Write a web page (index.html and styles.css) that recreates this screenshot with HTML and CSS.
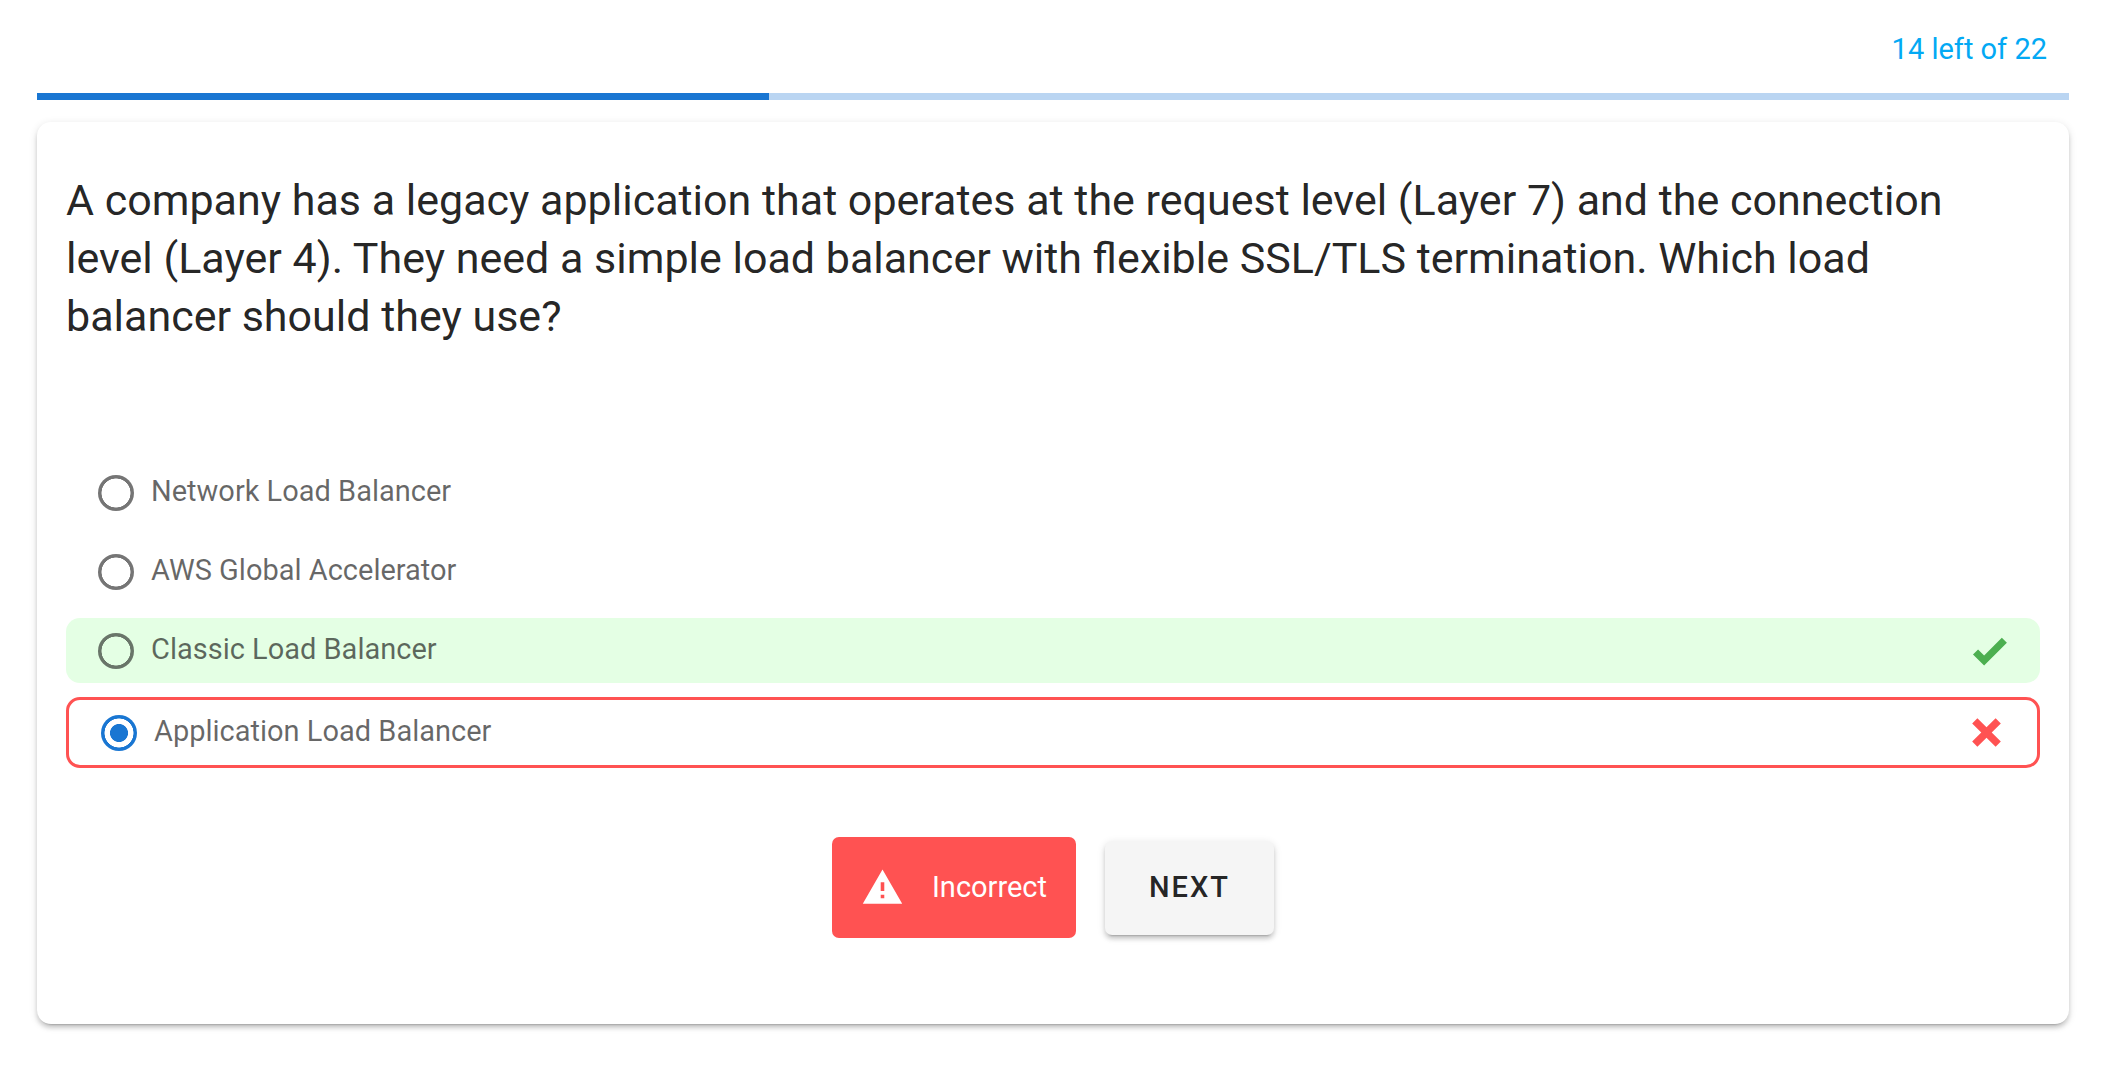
FILE: index.html
```html
<!DOCTYPE html>
<html lang="en">
<head>
  <meta charset="utf-8">
  <meta name="viewport" content="width=device-width, initial-scale=1">
  <title>Load balancer quiz</title>
  <link rel="stylesheet" href="styles.css">
</head>
<body>
  <main class="quiz">
    <p class="remaining" id="remaining">14 left of 22</p>
    <progress class="progress" value="36" max="100" aria-labelledby="remaining"></progress>

    <form class="card">
      <h1 class="question" id="question">A company has a legacy application that operates at the request level (Layer 7) and the connection level (Layer 4). They need a simple load balancer with flexible SSL/TLS termination. Which load balancer should they use?</h1>

      <div class="options" role="radiogroup" aria-labelledby="question">
        <div class="option">
          <input class="radio" type="radio" name="answer" id="answer-nlb">
          <label class="option-label" for="answer-nlb">Network Load Balancer</label>
        </div>
        <div class="option">
          <input class="radio" type="radio" name="answer" id="answer-aga">
          <label class="option-label" for="answer-aga">AWS Global Accelerator</label>
        </div>
        <div class="option option-correct">
          <input class="radio" type="radio" name="answer" id="answer-clb">
          <label class="option-label" for="answer-clb">Classic Load Balancer</label>
          <svg class="icon icon-correct" viewBox="0 0 24 24" aria-hidden="true"><path d="M9,20.42L2.79,14.21L5.62,11.38L9,14.77L18.88,4.88L21.71,7.71L9,20.42Z"/></svg>
        </div>
        <div class="option option-wrong">
          <input class="radio" type="radio" name="answer" id="answer-alb" checked>
          <label class="option-label" for="answer-alb">Application Load Balancer</label>
          <svg class="icon icon-wrong" viewBox="0 0 24 24" aria-hidden="true"><path d="M20 6.91L17.09 4L12 9.09L6.91 4L4 6.91L9.09 12L4 17.09L6.91 20L12 14.91L17.09 20L20 17.09L14.91 12L20 6.91Z"/></svg>
        </div>
      </div>

      <div class="actions">
        <div class="alert" role="alert">
          <svg class="icon" viewBox="0 0 24 24" aria-hidden="true"><path d="M13 14H11V9H13M13 18H11V16H13M1 21H23L12 2L1 21Z"/></svg>
          <span>Incorrect</span>
        </div>
        <button class="next" type="button">NEXT</button>
      </div>
    </form>
  </main>
</body>
</html>
```
FILE: styles.css
```css
* {
  box-sizing: border-box;
}

body {
  margin: 0;
  background: #fff;
  color: rgba(0, 0, 0, 0.87);
  font-family: Roboto, "Liberation Sans", sans-serif;
  font-size: 29px;
  line-height: 43px;
}

.quiz {
  display: flex;
  flex-direction: column;
  gap: 22px;
  padding: 28px 47px 28px 37px;
}

.remaining {
  margin: 0;
  padding-right: 22px;
  color: #03a9f4;
  text-align: right;
}

.progress {
  display: block;
  appearance: none;
  width: 100%;
  height: 7px;
  border: 0;
  background: #bad5f2;
}

.progress::-webkit-progress-bar {
  background: #bad5f2;
}

.progress::-webkit-progress-value {
  background: #1976d2;
}

.card {
  padding: 49px 29px 86px;
  border-radius: 14px;
  background: #fff;
  box-shadow:
    0 5px 2px -4px rgba(0, 0, 0, 0.2),
    0 4px 4px 0 rgba(0, 0, 0, 0.14),
    0 2px 9px 0 rgba(0, 0, 0, 0.12);
}

.question {
  margin: 0 0 115px;
  font-size: 43px;
  font-weight: 400;
  line-height: 58px;
}

.options {
  display: flex;
  flex-direction: column;
  gap: 14px;
}

.option {
  display: flex;
  align-items: center;
  gap: 17px;
  min-height: 65px;
  padding: 0 29px 0 32px;
  border-radius: 14px;
}

.option-correct {
  background: #e4ffe4;
}

.option-wrong {
  min-height: 71px;
  border: 3px solid #ff5252;
}

.option-label {
  flex: 1;
  padding-bottom: 3px;
  color: rgba(0, 0, 0, 0.6);
}

.radio {
  appearance: none;
  flex: none;
  width: 36px;
  height: 36px;
  margin: 0;
  border-radius: 50%;
  background: radial-gradient(closest-side, transparent 79%, #757575 82%);
}

.option-correct .radio {
  background: radial-gradient(closest-side, transparent 79%, #697569 82%);
}

.radio:checked {
  background: radial-gradient(closest-side, #1976d2 48%, transparent 52%, transparent 79%, #1976d2 82%);
}

.icon {
  flex: none;
  width: 43px;
  height: 43px;
  fill: currentColor;
}

.icon-correct {
  color: #4caf50;
}

.icon-wrong {
  color: #ff5252;
}

.actions {
  display: flex;
  justify-content: center;
  align-items: center;
  gap: 29px;
  margin-top: 69px;
}

.alert {
  display: flex;
  align-items: center;
  gap: 28px;
  padding: 29px;
  border-radius: 7px;
  background: #ff5252;
  color: #fff;
}

.next {
  min-height: 94px;
  padding: 0 44px;
  border: 0;
  border-radius: 7px;
  background: #f5f5f5;
  color: rgba(0, 0, 0, 0.87);
  font: inherit;
  font-weight: 500;
  letter-spacing: 2px;
  box-shadow:
    0 5px 2px -4px rgba(0, 0, 0, 0.2),
    0 4px 4px 0 rgba(0, 0, 0, 0.14),
    0 2px 9px 0 rgba(0, 0, 0, 0.12);
}
```
